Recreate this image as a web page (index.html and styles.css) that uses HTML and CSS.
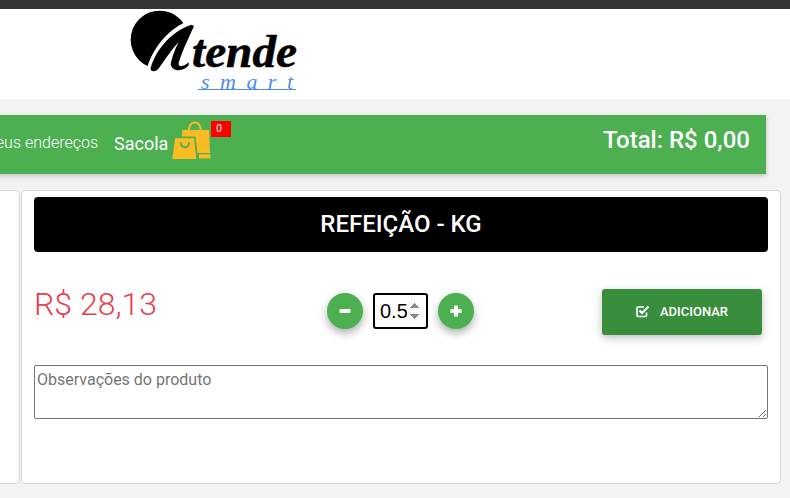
FILE: index.html
```html
<!DOCTYPE html>
<html>
<head>
    <meta charset="utf-8">
    <link rel="stylesheet" href="styles.css">
</head>
<body>
    <div class="top-line"></div>

    <header class="site-header">
        <svg class="logo" width="170" height="84" viewBox="0 0 170 84">
            <g transform="translate(-2 -1) scale(0.3333)">
                <circle cx="95" cy="95" r="87" fill="#000"/>
                <path d="M55 186 C72 122 122 58 188 36 L240 60 L215 200 L55 200 Z" fill="#fff"/>
                <path d="M68 180 C82 130 125 72 190 50 L198 54 C182 90 162 130 152 165 C150 178 165 178 182 163 L182 172 C165 192 135 192 128 170 C130 155 140 125 152 102 C125 132 105 165 90 184 C82 192 66 192 68 180 Z" fill="#000"/>
            </g>
            <text class="logo-main" x="62" y="58" textLength="105" lengthAdjust="spacingAndGlyphs">tende</text>
            <text class="logo-sub" x="71" y="80" textLength="92" lengthAdjust="spacing">smart</text>
            <path d="M68 80.500 H166" stroke="#4a8df0" stroke-width="1" fill="none"/>
        </svg>
    </header>

    <nav class="cart-bar">
        <a class="bar-link" href="#">Meus endereços</a>
        <a class="bag-link" href="#">
            <span class="bag-label">Sacola</span>
            <svg class="bag-icon" width="41" height="40" viewBox="0 0 41 40">
                <path d="M18 10 C18 3 20.500 1.500 23.700 1.500 C27 1.500 29.700 3 29.700 10" fill="none" stroke="#fbbc23" stroke-width="2"/>
                <path d="M11.300 9 H38 L39 32 H26.500 L24.500 15.500 H11 Z" fill="#fbbc23"/>
                <path d="M28 33.300 H39.500 V37.500 H28 Z" fill="#fbbc23"/>
                <path d="M4.200 17.300 H23 L25.300 38 H1.300 Z" fill="#fbbc23"/>
                <path d="M9.700 21.300 C10 28 18 28 18 21.300" fill="none" stroke="#4caf50" stroke-width="2"/>
            </svg>
            <span class="bag-count">0</span>
        </a>
        <strong class="bar-total">Total: R$ 0,00</strong>
    </nav>

    <main class="content">
        <aside class="side-card"></aside>
        <section class="product-card">
            <h1 class="product-title">REFEIÇÃO - KG</h1>
            <div class="product-row">
                <div class="product-price">R$ 28,13</div>
                <div class="qty">
                    <button class="qty-btn" type="button">
                        <svg width="12" height="12" viewBox="0 0 12 12"><rect x="0.500" y="4" width="11" height="4" rx="1" fill="#fff"/></svg>
                    </button>
                    <input class="qty-input" type="number" value="0.5" step="0.5">
                    <button class="qty-btn" type="button">
                        <svg width="12" height="12" viewBox="0 0 12 12"><path d="M4 0.500 H8 V4 H11.500 V8 H8 V11.500 H4 V8 H0.500 V4 H4 Z" fill="#fff"/></svg>
                    </button>
                </div>
                <button class="add-btn" type="button">
                    <svg width="14" height="13" viewBox="0 0 14 13">
                        <path d="M10.500 7.500 V10.500 C10.500 11 10 11.500 9.500 11.500 H2 C1.500 11.500 1 11 1 10.500 V3 C1 2.500 1.500 2 2 2 H8" fill="none" stroke="#fff" stroke-width="1.600"/>
                        <path d="M3.500 5.500 L6 8 L12.500 1.500" fill="none" stroke="#fff" stroke-width="2.200"/>
                    </svg>
                    ADICIONAR
                </button>
            </div>
            <textarea class="product-notes" placeholder="Observações do produto"></textarea>
        </section>
    </main>
</body>
</html>
```

FILE: styles.css
```css
* {
    box-sizing: border-box;
}

html, body {
    height: 498px;
    overflow: hidden;
}

body {
    margin: 0;
    background-color: #f3f3f3;
    font-family: Roboto, sans-serif;
}

.top-line {
    height: 9px;
    background-color: #343434;
}

.site-header {
    height: 90px;
    padding-left: 130px;
    background-color: #fff;
}

.logo {
    display: block;
}

.logo-main {
    font-family: "Liberation Serif", serif;
    font-size: 46px;
    font-style: italic;
    font-weight: 700;
    fill: #000;
    stroke: #000;
    stroke-width: 0.6px;
}

.logo-sub {
    font-family: "Liberation Serif", serif;
    font-size: 22px;
    font-style: italic;
    fill: #4a8df0;
}

.cart-bar {
    display: flex;
    align-items: center;
    width: 784px;
    height: 59px;
    margin: 16px 0 0 -18px;
    padding-right: 16px;
    background-color: #4caf50;
    color: #fff;
    box-shadow: 0 2px 5px rgba(0, 0, 0, 0.2);
}

.bar-link {
    margin-bottom: 4px;
    color: #fff;
    font-size: 16px;
    font-weight: 300;
    text-decoration: none;
    white-space: nowrap;
}

.bag-link {
    display: flex;
    align-items: center;
    margin-left: 16px;
    position: relative;
    color: #fff;
    font-size: 18px;
    text-decoration: none;
}

.bag-label {
    margin-bottom: 3px;
}

.bag-icon {
    margin: 0 0 8px 3px;
}

.bag-count {
    position: absolute;
    top: 0;
    right: -19px;
    width: 20px;
    height: 16px;
    padding-left: 5px;
    background-color: #f00;
    font-size: 10px;
    line-height: 16px;
}

.bar-total {
    margin-left: auto;
    margin-bottom: 10px;
    font-size: 24px;
    font-weight: 500;
}

.content {
    display: flex;
    gap: 1px;
    margin-top: 16px;
}

.side-card {
    flex: none;
    width: 30px;
    height: 294px;
    margin-left: -10px;
    background-color: #fff;
    border: 1px solid #d6d6d9;
    border-radius: 4px;
}

.product-card {
    width: 760px;
    height: 294px;
    padding: 6px 12px;
    background-color: #fff;
    border: 1px solid #d6d6d9;
    border-radius: 4px;
}

.product-title {
    height: 55px;
    margin: 0;
    background-color: #000;
    border-radius: 4px;
    color: #fff;
    font-size: 24px;
    font-weight: 500;
    line-height: 55px;
    text-align: center;
}

.product-row {
    display: flex;
    align-items: flex-start;
    height: 113px;
    padding-top: 37px;
}

.product-price {
    width: 293px;
    margin-top: -7px;
    color: #e8404f;
    font-size: 32px;
    font-weight: 300;
    line-height: 44px;
}

.qty {
    display: flex;
    align-items: center;
    gap: 10px;
    margin-top: 4px;
}

.qty-btn {
    display: flex;
    align-items: center;
    justify-content: center;
    width: 36px;
    height: 36px;
    padding: 0;
    background-color: #4caf50;
    border: none;
    border-radius: 50%;
    box-shadow: 0 4px 8px rgba(0, 0, 0, 0.32);
}

.qty-input {
    width: 55px;
    height: 36px;
    padding: 0 4px 0 5px;
    background-color: #fff;
    border: 2px solid #000;
    border-radius: 3px;
    color: #000;
    font-family: "Liberation Sans", sans-serif;
    font-size: 20px;
}

.qty-input::-webkit-inner-spin-button {
    opacity: 1;
}

.add-btn {
    display: flex;
    align-items: center;
    justify-content: center;
    gap: 10px;
    width: 160px;
    height: 46px;
    margin-left: auto;
    margin-right: 6px;
    padding-bottom: 2px;
    background-color: #388e3c;
    border: none;
    border-radius: 3px;
    box-shadow: 0 3px 8px rgba(0, 0, 0, 0.25);
    color: #fff;
    font-family: Roboto, sans-serif;
    font-size: 13px;
    font-weight: 500;
}

.product-notes {
    display: block;
    width: 734px;
    height: 54px;
    padding: 4px 2px;
    border: 1px solid #767676;
    border-radius: 2px;
    font-family: Roboto, sans-serif;
    font-size: 16px;
}
```
